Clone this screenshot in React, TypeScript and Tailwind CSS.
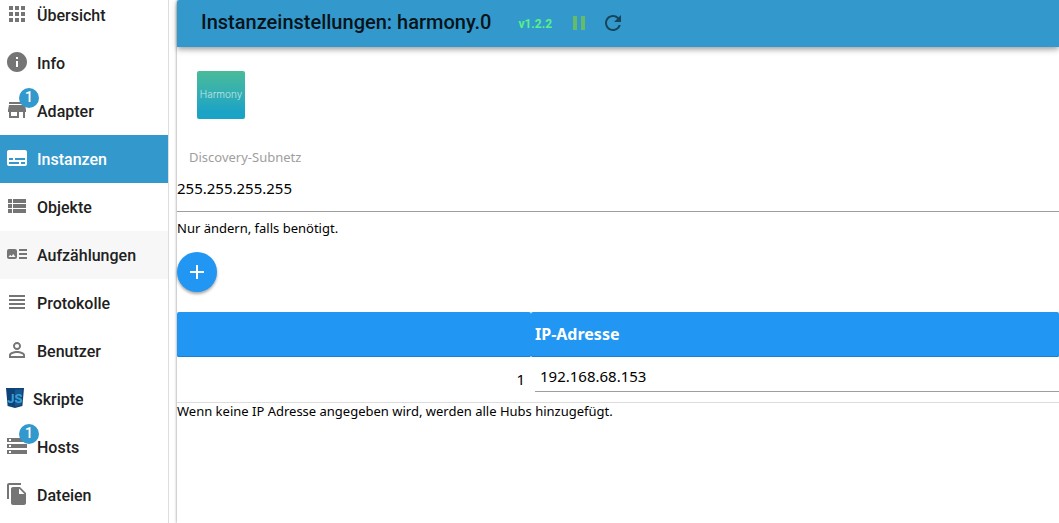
import { useState } from "react";
import clsx from "clsx";
import type { IconType } from "react-icons";
import {
  MdAdd,
  MdApps,
  MdArtTrack,
  MdFileCopy,
  MdInfo,
  MdPause,
  MdPersonOutline,
  MdRefresh,
  MdStorage,
  MdStore,
  MdSubtitles,
  MdViewHeadline,
  MdViewList,
} from "react-icons/md";

type NavEntry = {
  label: string;
  icon?: IconType;
  badge?: number;
  hovered?: boolean;
};

const entries: NavEntry[] = [
  { label: "Übersicht", icon: MdApps },
  { label: "Info", icon: MdInfo },
  { label: "Adapter", icon: MdStore, badge: 1 },
  { label: "Instanzen", icon: MdSubtitles },
  { label: "Objekte", icon: MdViewList },
  { label: "Aufzählungen", icon: MdArtTrack, hovered: true },
  { label: "Protokolle", icon: MdViewHeadline },
  { label: "Benutzer", icon: MdPersonOutline },
  { label: "Skripte" },
  { label: "Hosts", icon: MdStorage, badge: 1 },
  { label: "Dateien", icon: MdFileCopy },
];

function ScriptIcon() {
  return (
    <svg viewBox="0 0 18 20" className="h-5 w-[18px]" aria-hidden="true">
      <path d="M0 0h18l-1.6 18L9 20l-7.4-2z" fill="#0f4377" />
      <path d="M9 1.500h7.300l-1.300 15.300L9 18.500z" fill="#17578f" />
      <text
        x="9"
        y="14.500"
        textAnchor="middle"
        fontFamily="Roboto, sans-serif"
        fontWeight="700"
        fontSize="13"
        fill="#35a0d8"
      >
        JS
      </text>
    </svg>
  );
}

function NavItem({ entry, active }: { entry: NavEntry; active: boolean }) {
  const Icon = entry.icon;
  return (
    <li>
      <a
        href="#"
        aria-current={active ? "page" : undefined}
        className={clsx(
          "flex h-12 items-center text-base font-medium",
          Icon ? "gap-2 pl-[5px]" : "gap-[9px] pl-1.5",
          active ? "bg-[#3399cc] text-white" : "text-[#212121]",
          entry.hovered && "bg-[#f7f7f7]",
        )}
      >
        <span className="relative pb-0.5">
          {Icon ? (
            <Icon
              className={clsx("size-6", active ? "text-white" : "text-[#757575]")}
            />
          ) : (
            <ScriptIcon />
          )}
          {entry.badge && (
            <span className="absolute -top-2.5 left-3.5 flex size-5 items-center justify-center rounded-full bg-[#3399cc] pb-0.5 text-sm text-white">
              {entry.badge}
            </span>
          )}
        </span>
        <span className="pt-0.5">{entry.label}</span>
      </a>
    </li>
  );
}

function HarmonyLogo() {
  return (
    <div className="flex size-12 items-center justify-center rounded-xs bg-linear-to-b from-[#4abb98] to-[#1ba3c6] to-85% pb-0.5 font-[Inter,sans-serif] text-[10px] font-light text-white/70">
      Harmony
    </div>
  );
}

function InstanceHeader() {
  return (
    <header className="flex h-[47px] shrink-0 items-center rounded-tl-xs bg-[#3399cc] pb-1 pl-6 shadow-[0_2px_4px_-1px_rgba(0,0,0,0.2),0_4px_5px_rgba(0,0,0,0.14),0_1px_10px_rgba(0,0,0,0.12)]">
      <h1 className="text-xl font-medium text-[#061319]">
        Instanzeinstellungen: harmony.0
      </h1>
      <span className="ml-[27px] pt-1 text-xs font-bold text-[#57f287]">v1.2.2</span>
      <button type="button" aria-label="Pause" className="ml-[15px] pt-0.5">
        <MdPause className="size-6 text-[#66bb6a]" />
      </button>
      <button type="button" aria-label="Neu laden" className="ml-2.5 pt-0.5">
        <MdRefresh className="size-6 text-[#17455c]" />
      </button>
    </header>
  );
}

export default function App() {
  const [subnet, setSubnet] = useState("255.255.255.255");
  const [address, setAddress] = useState("192.168.68.153");

  return (
    <div className="flex h-screen overflow-hidden bg-white font-[Roboto,sans-serif]">
      <nav className="w-[169px] shrink-0 overflow-hidden border-r border-[#dddddd]">
        <ul className="-mt-[9px]">
          {entries.map((entry) => (
            <NavItem
              key={entry.label}
              entry={entry}
              active={entry.label === "Instanzen"}
            />
          ))}
        </ul>
      </nav>

      <main className="ml-2 flex min-w-0 flex-1 flex-col rounded-tl-xs shadow-[0_0_3px_rgba(0,0,0,0.5)]">
        <InstanceHeader />

        <div className="pt-6 font-['Noto_Sans',sans-serif] text-[13px] text-black">
          <div className="pl-5">
            <HarmonyLogo />
          </div>

          <div className="mt-7">
            <label
              htmlFor="subnet"
              className="block pl-3 leading-5 text-[#9e9e9e]"
            >
              Discovery-Subnetz
            </label>
            <input
              id="subnet"
              value={subnet}
              onChange={(e) => setSubnet(e.target.value)}
              className="block h-[45px] w-full border-b border-[#9e9e9e] pb-0.5 text-[15px] outline-none"
            />
            <p className="pt-1.5 leading-5">Nur ändern, falls benötigt.</p>
          </div>

          <button
            type="button"
            aria-label="Hinzufügen"
            className="mt-3.5 flex size-10 items-center justify-center rounded-full bg-[#2196f3] text-white shadow-[0_2px_3px_rgba(0,0,0,0.35)]"
          >
            <MdAdd className="size-6" />
          </button>

          <table className="mt-5 w-full table-fixed">
            <thead>
              <tr className="h-[45px]">
                <th className="w-[354px] rounded-xs bg-[#2196f3] shadow-[inset_0_-1px_0_#1a7fd0]" />
                <th className="rounded-xs bg-[#2196f3] pb-0.5 pl-1 text-left text-base font-bold text-white shadow-[inset_0_-1px_0_#1a7fd0]">
                  IP-Adresse
                </th>
              </tr>
            </thead>
            <tbody>
              <tr className="h-[45px] border-b border-[#dddddd]">
                <td className="pr-1.5 text-right text-[15px]">1</td>
                <td className="pl-1 align-top">
                  <input
                    aria-label="IP-Adresse"
                    value={address}
                    onChange={(e) => setAddress(e.target.value)}
                    className="block h-[35px] w-full border-b border-[#9e9e9e] pt-1 pl-[5px] text-[15px] outline-none"
                  />
                </td>
              </tr>
            </tbody>
          </table>
          <p className="leading-4">
            Wenn keine IP Adresse angegeben wird, werden alle Hubs hinzugefügt.
          </p>
        </div>
      </main>
    </div>
  );
}
